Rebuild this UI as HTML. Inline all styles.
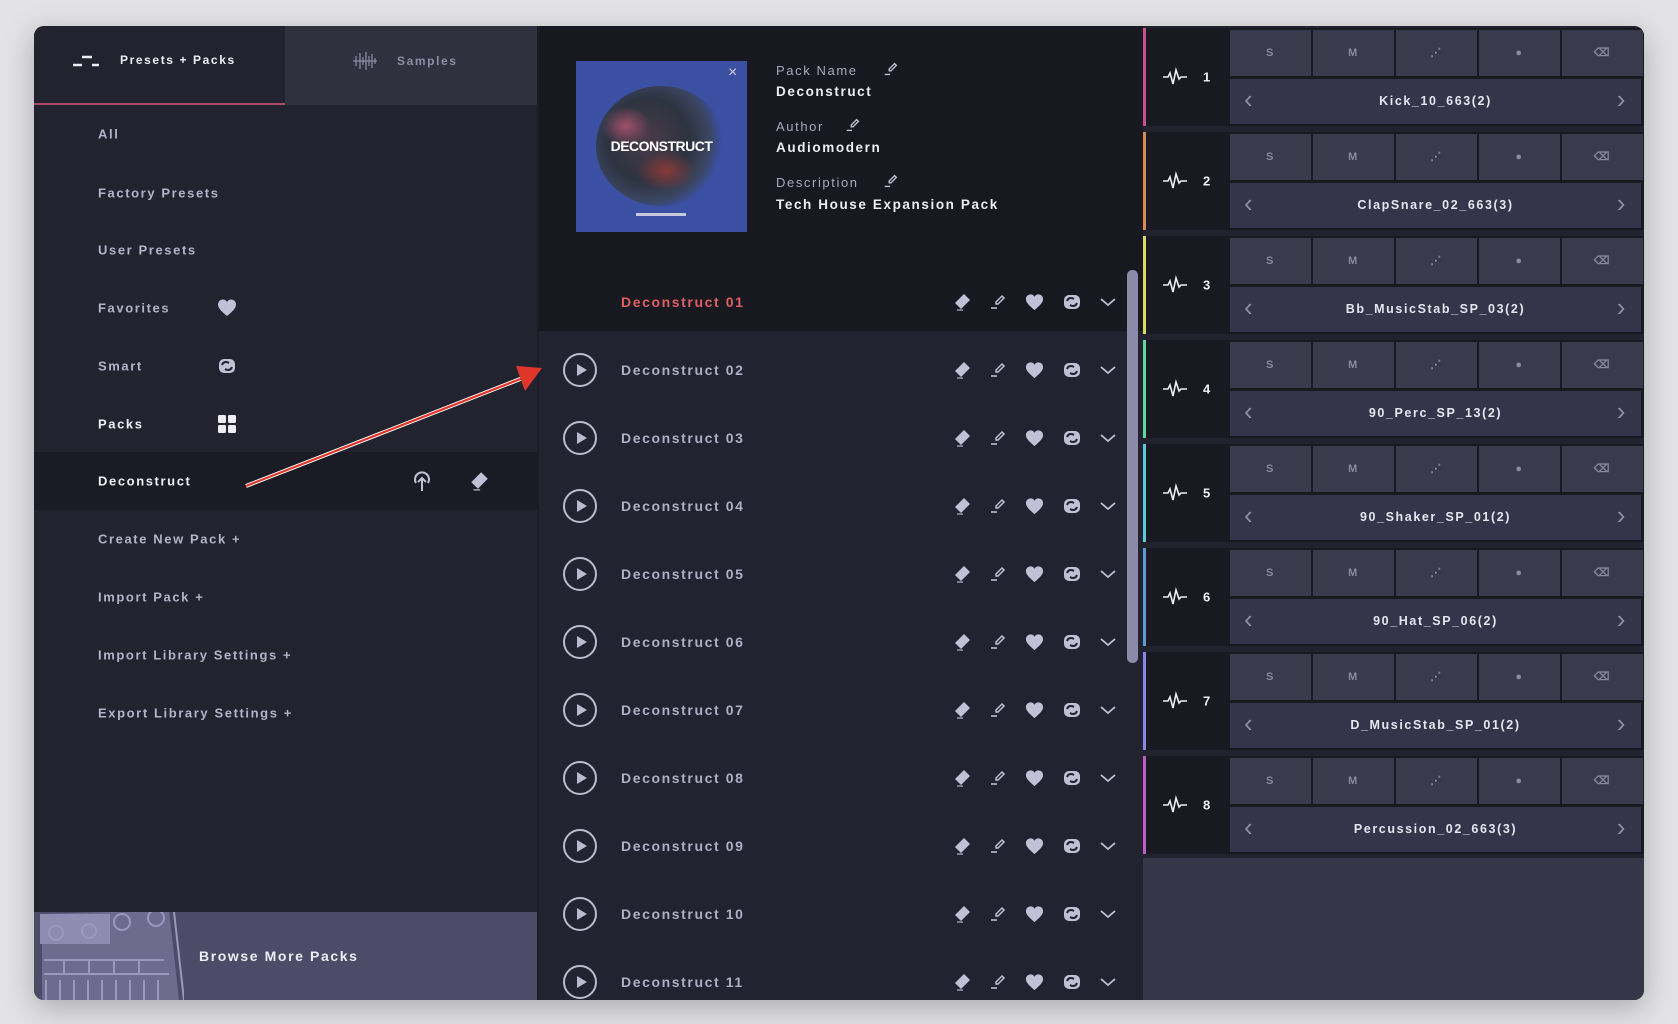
<!DOCTYPE html>
<html><head><meta charset="utf-8">
<style>
*{margin:0;padding:0;box-sizing:border-box}
body{width:1678px;height:1024px;background:#e3e3e5;position:relative;overflow:hidden;font-family:"Liberation Sans",sans-serif;font-weight:bold;letter-spacing:1.6px}
.a{position:absolute}
#win{left:34px;top:26px;width:1610px;height:974px;border-radius:10px;overflow:hidden;background:#232330;box-shadow:0 8px 30px rgba(0,0,0,.25)}
.li{position:absolute;left:64px;font-size:13px;color:#b4b2c8;transform:translateY(-50%)}
.w{color:#eeedf6}
.ic{position:absolute;transform:translate(-50%,-50%)}
.row{position:absolute;left:503px;width:590px;height:68px}
.row .t{position:absolute;left:84px;top:50%;transform:translateY(-50%);font-size:14px;color:#b0aec4}
.play{position:absolute;left:26px;top:50%;width:34px;height:34px;margin-top:-17px;border:2px solid #bcbacd;border-radius:50%}
.play:after{content:"";position:absolute;left:12px;top:9px;border-left:10px solid #bcbacd;border-top:6.5px solid transparent;border-bottom:6.5px solid transparent}
.trk{position:absolute;left:1109px;width:501px;height:98px;background:#191922}
.bar{position:absolute;left:0;top:0;width:3px;height:100%}
.num{position:absolute;left:60px;top:50%;transform:translateY(-50%);font-size:13px;color:#f0f0f6;letter-spacing:0}
.wave{position:absolute;left:19px;top:50%;transform:translateY(-50%)}
.btn{position:absolute;top:2px;height:46px;width:81px;background:#3a3a4d;color:#8a88a0;font-size:11px;text-align:center;line-height:46px}
.nm{position:absolute;left:87px;top:51px;width:411px;height:45px;background:#34344a;color:#e6e5f0;font-size:12.5px;text-align:center;line-height:45px}
.nm:before{content:"‹";position:absolute;left:14px;top:-2px;font-size:26px;color:#8d8ba3;font-weight:normal}
.nm:after{content:"›";position:absolute;right:14px;top:-2px;font-size:26px;color:#8d8ba3;font-weight:normal}
</style></head><body>
<svg width="0" height="0" style="position:absolute">
<defs>
<symbol id="heart" viewBox="0 0 20 20"><path d="M10 18C4 13 1 10 1 6.5 1 3.5 3.3 1.5 6 1.5 7.8 1.5 9.2 2.5 10 4 10.8 2.5 12.2 1.5 14 1.5 16.7 1.5 19 3.5 19 6.5 19 10 16 13 10 18Z" fill="#c2c0d6"/></symbol>
<symbol id="eraser" viewBox="0 0 20 20"><path d="M12 2 18 8 9 17 3 11Z" fill="#c2c0d6"/><path d="M5 18H11" stroke="#9896ae" stroke-width="1.5"/></symbol>
<symbol id="pen" viewBox="0 0 20 20"><path d="M14 4 16 6 10 12 8 12 8 10Z" fill="none" stroke="#c2c0d6" stroke-width="1.5"/><path d="M3 16H9" stroke="#c2c0d6" stroke-width="1.5"/></symbol>
<symbol id="swap" viewBox="0 0 20 20"><rect x="2" y="3" width="16" height="14" rx="5" fill="#c2c0d6"/><path d="M5 9C6 6 9 5 12 7M15 11C14 14 11 15 8 13" stroke="#232330" stroke-width="2" fill="none"/></symbol>
<symbol id="chev" viewBox="0 0 20 20"><path d="M3 7 10 13 17 7" stroke="#c2c0d6" stroke-width="1.8" fill="none"/></symbol>
<symbol id="wave" viewBox="0 0 26 20"><path d="M1 10H6L8 6 11 17 14 3 17 12 19 10H25" stroke="#eeedf6" stroke-width="1.6" fill="none"/></symbol>
</defs></svg>

<div id="win" class="a">
 <div class="a" style="left:0;top:0;width:251px;height:79px;background:#232330"></div>
 <div class="a" style="left:0;top:77px;width:251px;height:2px;background:#b0486a"></div>
 <div class="a" style="left:251px;top:0;width:252px;height:79px;background:#30303f"></div>
 <svg class="a" style="left:38px;top:28px" width="28" height="14"><path d="M1 11H10M10 3H20M20 11H27" stroke="#eeedf6" stroke-width="2.4"/></svg>
 <div class="a" style="left:86px;top:27px;font-size:12px;color:#eeedf6">Presets + Packs</div>
 <svg class="a" style="left:318px;top:24px" width="26" height="22"><path d="M1 11H25M4 6V16M8 3V19M11 7V15M14 2V20M17 6V16M20 4V18M23 8V14" stroke="#8f8da6" stroke-width="1.2"/></svg>
 <div class="a" style="left:363px;top:28px;font-size:12px;color:#8f8da6">Samples</div>

 <div class="li" style="top:108px">All</div>
 <div class="li" style="top:167px">Factory Presets</div>
 <div class="li" style="top:224px">User Presets</div>
 <div class="li" style="top:282px">Favorites</div>
 <svg class="ic" style="left:193px;top:282px" width="20" height="20"><use href="#heart"/></svg>
 <div class="li" style="top:340px">Smart</div>
 <svg class="ic" style="left:193px;top:340px" width="20" height="20"><use href="#swap"/></svg>
 <div class="li w" style="top:398px">Packs</div>
 <svg class="ic" style="left:193px;top:398px" width="18" height="18"><rect x="0" y="0" width="8" height="8" rx="1.5" fill="#eeedf6"/><rect x="10" y="0" width="8" height="8" rx="1.5" fill="#eeedf6"/><rect x="0" y="10" width="8" height="8" rx="1.5" fill="#eeedf6"/><rect x="10" y="10" width="8" height="8" rx="1.5" fill="#eeedf6"/></svg>
 <div class="a" style="left:0;top:426px;width:503px;height:58px;background:#1b1b25"></div>
 <div class="li w" style="top:455px">Deconstruct</div>
 <svg class="ic" style="left:388px;top:455px" width="20" height="22"><path d="M4 13A7 7 0 1 1 16 13" stroke="#c2c0d6" stroke-width="2" fill="none"/><path d="M10 21V8M6 12 10 8 14 12" stroke="#c2c0d6" stroke-width="2" fill="none"/></svg>
 <svg class="ic" style="left:445px;top:455px" width="22" height="22"><use href="#eraser"/></svg>
 <div class="li" style="top:513px">Create New Pack +</div>
 <div class="li" style="top:571px">Import Pack +</div>
 <div class="li" style="top:629px">Import Library Settings +</div>
 <div class="li" style="top:687px">Export Library Settings +</div>

 <div class="a" style="left:0;top:886px;width:503px;height:88px;background:#4c4c68"></div>
 <svg class="a" style="left:0;top:886px" width="150" height="88"><g stroke="#9a98bd" stroke-width="2" fill="none"><path d="M8 2 135 -2 145 88 8 92Z" fill="#6d6b8e" stroke="none"/><rect x="6" y="2" width="70" height="30" fill="#8e8cb0" stroke="none"/><circle cx="22" cy="21" r="7"/><circle cx="55" cy="19" r="7"/><circle cx="88" cy="10" r="8"/><circle cx="122" cy="6" r="8"/><path d="M10 48H130M10 62H135M30 48V62M55 48V62M80 48V62M105 48V62"/><path d="M12 68V88M26 68V88M40 68V88M54 68V88M68 68V88M82 68V88M96 68V88M110 68V88M124 68V88"/><path d="M140 0 150 88"/></g></svg>
 <div class="a" style="left:165px;top:922px;font-size:14px;color:#eeedf6">Browse More Packs</div>
 <div class="a" style="left:503px;top:0;width:2px;height:974px;background:#1c1c26"></div>

 <div class="a" style="left:505px;top:0;width:604px;height:305px;background:#181820"></div>
 <div class="a" style="left:505px;top:305px;width:604px;height:669px;background:#222230"></div>
 <div class="a" style="left:542px;top:35px;width:171px;height:171px;background:#3b4fa3;overflow:hidden">
  <div class="a" style="left:20px;top:25px;width:130px;height:120px;border-radius:50%;background:radial-gradient(circle at 40% 45%,#4a3a48 0,#2d3340 40%,#3a4560 60%,rgba(59,79,163,0) 72%)"></div>
  <div class="a" style="left:25px;top:45px;width:50px;height:40px;border-radius:50%;background:radial-gradient(#a0506a,rgba(160,80,106,0) 70%)"></div>
  <div class="a" style="left:60px;top:90px;width:60px;height:40px;border-radius:50%;background:radial-gradient(#8a3a3a,rgba(138,58,58,0) 70%)"></div>
  <div class="a" style="left:20px;top:77px;width:131px;text-align:center;font-size:14px;color:#fff;letter-spacing:-0.5px;font-weight:900">DECONSTRUCT</div>
  <div class="a" style="left:60px;top:152px;width:50px;height:3px;background:#c8c8e0"></div>
  <div class="a" style="left:152px;top:3px;font-size:16px;color:#d0d0e8;font-weight:normal">×</div>
 </div>
 <div class="a" style="left:742px;top:37px;font-size:13px;color:#a9a7bf;font-weight:normal">Pack Name</div>
 <svg class="a" style="left:848px;top:34px" width="18" height="18"><use href="#pen"/></svg>
 <div class="a" style="left:742px;top:58px;font-size:13.5px;color:#eeedf6">Deconstruct</div>
 <div class="a" style="left:742px;top:93px;font-size:13px;color:#a9a7bf;font-weight:normal">Author</div>
 <svg class="a" style="left:810px;top:90px" width="18" height="18"><use href="#pen"/></svg>
 <div class="a" style="left:742px;top:114px;font-size:13.5px;color:#eeedf6">Audiomodern</div>
 <div class="a" style="left:742px;top:149px;font-size:13px;color:#a9a7bf;font-weight:normal">Description</div>
 <svg class="a" style="left:848px;top:146px" width="18" height="18"><use href="#pen"/></svg>
 <div class="a" style="left:742px;top:171px;font-size:13.5px;color:#eeedf6">Tech House Expansion Pack</div>

 <div class="a" style="left:1093px;top:244px;width:11px;height:393px;border-radius:5px;background:#8c8aa8"></div>

 <div class="row" style="top:242px"><div class="t" style="color:#e05f62">Deconstruct 01</div></div>
 <div class="row" style="top:310px"><div class="play"></div><div class="t">Deconstruct 02</div></div>
 <div class="row" style="top:378px"><div class="play"></div><div class="t">Deconstruct 03</div></div>
 <div class="row" style="top:446px"><div class="play"></div><div class="t">Deconstruct 04</div></div>
 <div class="row" style="top:514px"><div class="play"></div><div class="t">Deconstruct 05</div></div>
 <div class="row" style="top:582px"><div class="play"></div><div class="t">Deconstruct 06</div></div>
 <div class="row" style="top:650px"><div class="play"></div><div class="t">Deconstruct 07</div></div>
 <div class="row" style="top:718px"><div class="play"></div><div class="t">Deconstruct 08</div></div>
 <div class="row" style="top:786px"><div class="play"></div><div class="t">Deconstruct 09</div></div>
 <div class="row" style="top:854px"><div class="play"></div><div class="t">Deconstruct 10</div></div>
 <div class="row" style="top:922px"><div class="play"></div><div class="t">Deconstruct 11</div></div>

 <svg class="a" style="left:918px;top:242px" width="170" height="750">
  <g id="ir">
   <use href="#eraser" x="0" y="24" width="20" height="20"/>
   <use href="#pen" x="36" y="24" width="20" height="20"/>
   <use href="#heart" x="73" y="25" width="19" height="19"/>
   <use href="#swap" x="110" y="24" width="20" height="20"/>
   <use href="#chev" x="146" y="24" width="20" height="20"/>
  </g>
  <use href="#ir" y="68"/><use href="#ir" y="136"/><use href="#ir" y="204"/><use href="#ir" y="272"/><use href="#ir" y="340"/><use href="#ir" y="408"/><use href="#ir" y="476"/><use href="#ir" y="544"/><use href="#ir" y="612"/><use href="#ir" y="680"/>
 </svg>

 <div class="a" style="left:1109px;top:0;width:501px;height:974px;background:#363649"></div>
 <div class="a" style="left:1109px;top:0;width:501px;height:832px;background:#22222e"></div>

 <div class="trk" style="top:2px"><div class="bar" style="background:#c8508e"></div><svg class="wave" width="26" height="20"><use href="#wave"/></svg><div class="num">1</div>
  <div class="btn" style="left:87px">S</div><div class="btn" style="left:170px">M</div><div class="btn" style="left:253px">⋰</div><div class="btn" style="left:336px">●</div><div class="btn" style="left:419px">⌫</div><div class="nm">Kick_10_663(2)</div></div>
 <div class="trk" style="top:106px"><div class="bar" style="background:#d88a4e"></div><svg class="wave" width="26" height="20"><use href="#wave"/></svg><div class="num">2</div>
  <div class="btn" style="left:87px">S</div><div class="btn" style="left:170px">M</div><div class="btn" style="left:253px">⋰</div><div class="btn" style="left:336px">●</div><div class="btn" style="left:419px">⌫</div><div class="nm">ClapSnare_02_663(3)</div></div>
 <div class="trk" style="top:210px"><div class="bar" style="background:#d6d860"></div><svg class="wave" width="26" height="20"><use href="#wave"/></svg><div class="num">3</div>
  <div class="btn" style="left:87px">S</div><div class="btn" style="left:170px">M</div><div class="btn" style="left:253px">⋰</div><div class="btn" style="left:336px">●</div><div class="btn" style="left:419px">⌫</div><div class="nm">Bb_MusicStab_SP_03(2)</div></div>
 <div class="trk" style="top:314px"><div class="bar" style="background:#5ed8a0"></div><svg class="wave" width="26" height="20"><use href="#wave"/></svg><div class="num">4</div>
  <div class="btn" style="left:87px">S</div><div class="btn" style="left:170px">M</div><div class="btn" style="left:253px">⋰</div><div class="btn" style="left:336px">●</div><div class="btn" style="left:419px">⌫</div><div class="nm">90_Perc_SP_13(2)</div></div>
 <div class="trk" style="top:418px"><div class="bar" style="background:#5ecad8"></div><svg class="wave" width="26" height="20"><use href="#wave"/></svg><div class="num">5</div>
  <div class="btn" style="left:87px">S</div><div class="btn" style="left:170px">M</div><div class="btn" style="left:253px">⋰</div><div class="btn" style="left:336px">●</div><div class="btn" style="left:419px">⌫</div><div class="nm">90_Shaker_SP_01(2)</div></div>
 <div class="trk" style="top:522px"><div class="bar" style="background:#5a9ad8"></div><svg class="wave" width="26" height="20"><use href="#wave"/></svg><div class="num">6</div>
  <div class="btn" style="left:87px">S</div><div class="btn" style="left:170px">M</div><div class="btn" style="left:253px">⋰</div><div class="btn" style="left:336px">●</div><div class="btn" style="left:419px">⌫</div><div class="nm">90_Hat_SP_06(2)</div></div>
 <div class="trk" style="top:626px"><div class="bar" style="background:#8a86e6"></div><svg class="wave" width="26" height="20"><use href="#wave"/></svg><div class="num">7</div>
  <div class="btn" style="left:87px">S</div><div class="btn" style="left:170px">M</div><div class="btn" style="left:253px">⋰</div><div class="btn" style="left:336px">●</div><div class="btn" style="left:419px">⌫</div><div class="nm">D_MusicStab_SP_01(2)</div></div>
 <div class="trk" style="top:730px"><div class="bar" style="background:#c05ec8"></div><svg class="wave" width="26" height="20"><use href="#wave"/></svg><div class="num">8</div>
  <div class="btn" style="left:87px">S</div><div class="btn" style="left:170px">M</div><div class="btn" style="left:253px">⋰</div><div class="btn" style="left:336px">●</div><div class="btn" style="left:419px">⌫</div><div class="nm">Percussion_02_663(3)</div></div>
</div>

<svg class="a" style="left:0;top:0" width="1678" height="1024">
 <line x1="246" y1="486" x2="528" y2="376" stroke="#fff" stroke-width="4"/>
 <line x1="246" y1="486" x2="528" y2="376" stroke="#e0352a" stroke-width="2.2"/>
 <path d="M542 368 516 366 525 391Z" fill="#e0352a"/>
</svg>
</body></html>
